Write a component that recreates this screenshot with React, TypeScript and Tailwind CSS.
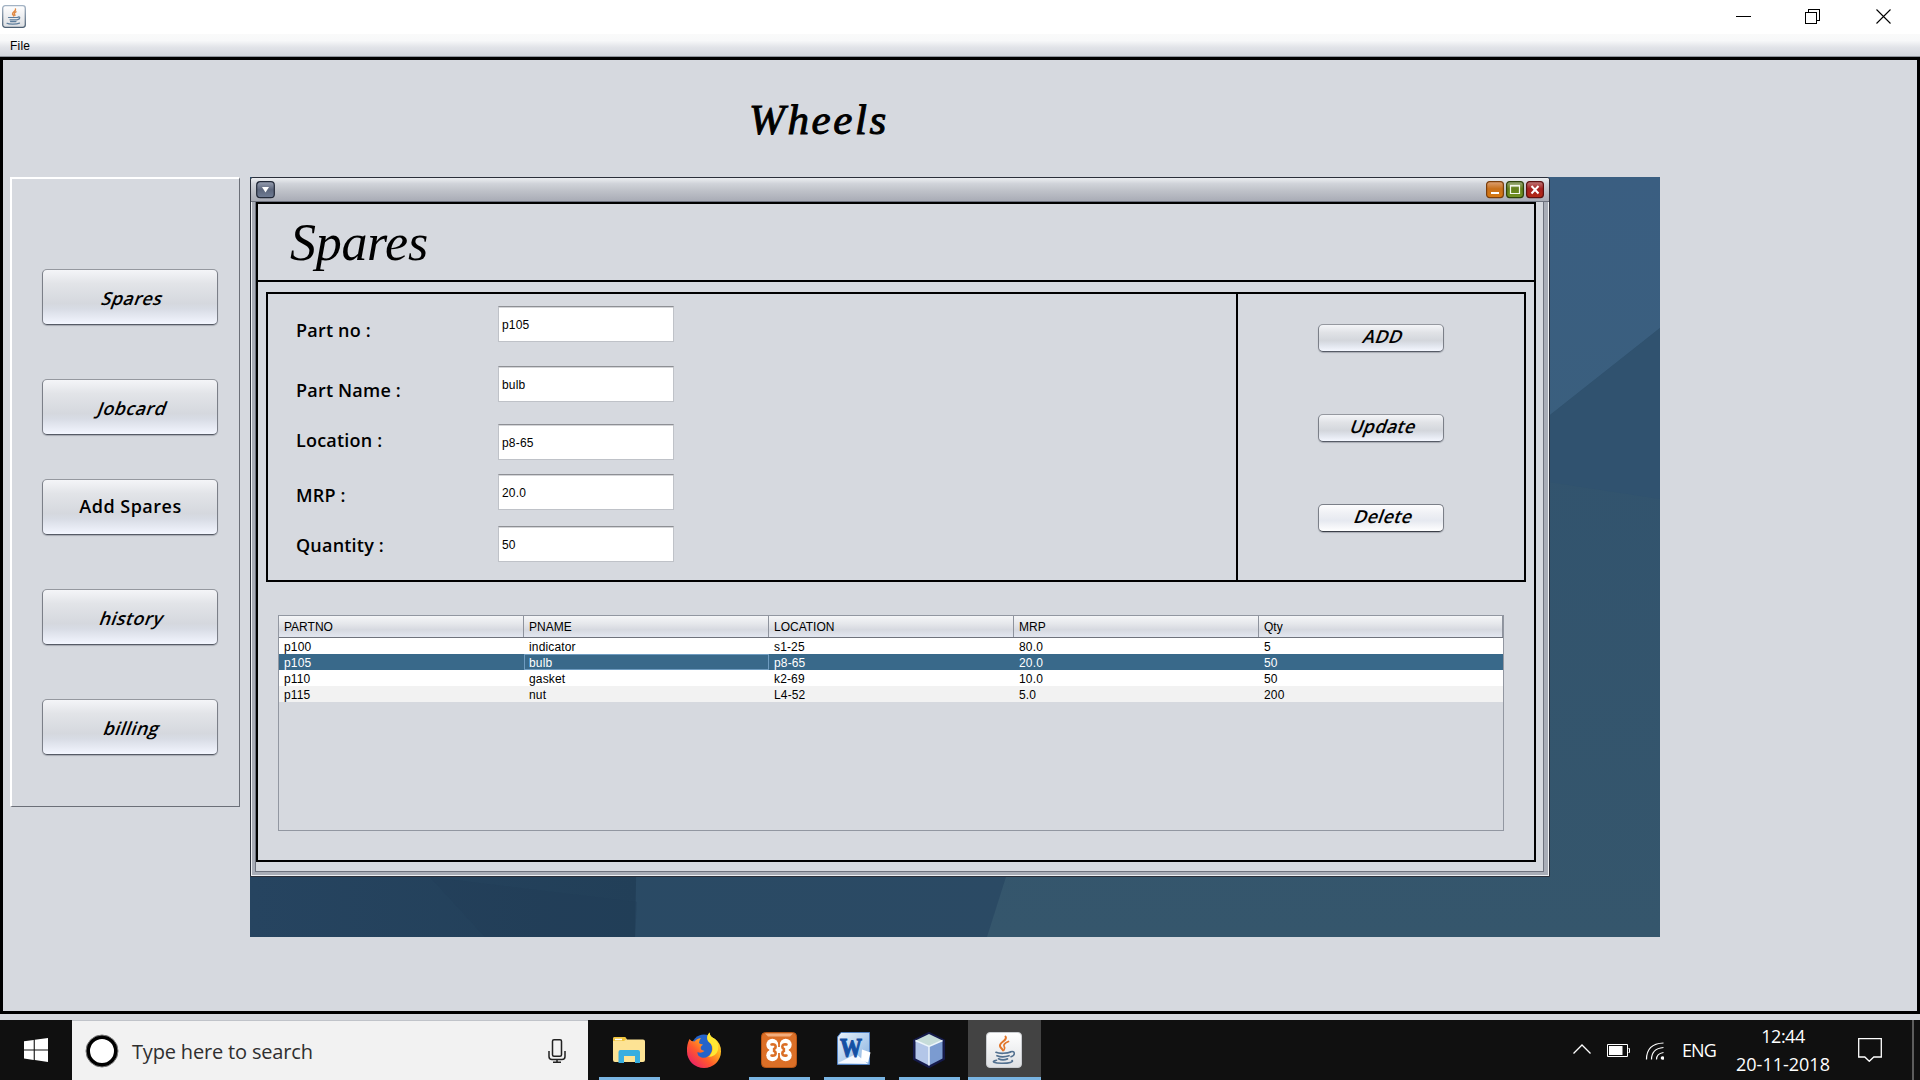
import React from "react";

const UI = "font-['Liberation_Sans',Arial,sans-serif]";
const SEGOE = "font-['Open_Sans','Noto_Sans',sans-serif]";

function JavaCup({ className }: { className: string }) {
  return (
    <svg viewBox="0 0 36 36" className={className}>
      <defs>
        <linearGradient id="cupBg" x1="0" y1="0" x2="0" y2="1">
          <stop offset="0" stopColor="#ffffff" />
          <stop offset="1" stopColor="#dfe1e4" />
        </linearGradient>
      </defs>
      <rect x="0.5" y="0.5" width="35" height="35" rx="3.5" fill="url(#cupBg)" stroke="#c9ccd0" />
      <g fill="none" strokeLinecap="round">
        <path d="M19.5 4.5c2.8 4-6.5 5.500-5.500 9.500.4 2 2.500 2.800 3 4.500" stroke="#e2762a" strokeWidth="2" />
        <path d="M22.500 9.500c-3.500 1.500-5.500 3-4.300 5 .9 1.400.9 2.200-.2 3.500" stroke="#e2762a" strokeWidth="1.700" />
        <path d="M10 20.300c3 1.500 11.500 1.200 14.500-.3M11 23.700c3.500 1.400 8.500 1.200 12 0M12.500 26.800c2.500 1.200 6.500 1.200 9 .1" stroke="#52708f" strokeWidth="1.700" />
        <path d="M24.500 19.800c5-1.500 5 3.500.5 5" stroke="#52708f" strokeWidth="1.500" />
        <path d="M10.500 28.200c-6.500 1.200-2 3.300 6 3.100 6.500-.1 11.500-1.300 9.500-2.800" stroke="#52708f" strokeWidth="1.600" />
      </g>
    </svg>
  );
}

function TitleBar() {
  return (
    <div className="flex h-[34px] shrink-0 items-start justify-between bg-white">
      <svg viewBox="0 0 24 23" className="mt-[5px] ml-[2px] h-[23px] w-[24px]">
        <defs>
          <linearGradient id="appIcon" x1="0" y1="0" x2="0" y2="1">
            <stop offset="0" stopColor="#ffffff" />
            <stop offset="1" stopColor="#dcdee2" />
          </linearGradient>
          <linearGradient id="appEdge" x1="0" y1="0" x2="0" y2="1">
            <stop offset="0" stopColor="#a3b3c4" />
            <stop offset="1" stopColor="#4d6074" />
          </linearGradient>
        </defs>
        <rect x="0.700" y="0.700" width="22.600" height="21.600" rx="2.500" fill="url(#appIcon)" stroke="url(#appEdge)" strokeWidth="1.300" />
        <g fill="none" strokeLinecap="round">
          <path d="M13.500 4c1 2-3.500 3-3 5 .2 1 1.200 1.200 1.200 2M14 6.800c-2 1-2 2.200-1 3.400" stroke="#e08a45" strokeWidth="1.400" />
          <path d="M6.500 12.500h9.500M8 14.800h7M8.500 16.600h5.500M16 12c2.500-.6 2.200 2-.3 2.600M5 18.300c2 1.300 9.500 1.200 12.500-.2" stroke="#5d7d9c" strokeWidth="1.200" />
        </g>
      </svg>
      <svg viewBox="0 0 156 15" className="mt-[9px] mr-[28px] h-[15px] w-[156px]" fill="none" stroke="#000" strokeWidth="1" shapeRendering="crispEdges">
        <path d="M0 7.500H15" />
        <path d="M69.500 3.500h11v11h-11z M72.500 3.500v-3h11v11h-3" />
        <path d="M140.500 0.500l14 14M154.500 0.500l-14 14" shapeRendering="auto" strokeWidth="1.100" />
      </svg>
    </div>
  );
}

function NavButton({ label, slanted, gap }: { label: string; slanted: boolean; gap: string }) {
  return (
    <button
      className={`${gap} ${SEGOE} flex h-[56px] w-[176px] items-center justify-center rounded-[5px] border border-t-[#95989f] border-r-[#7b7f88] border-b-[#565b66] border-l-[#7b7f88] bg-[linear-gradient(180deg,#f4f5f8_0%,#e2e4e8_25%,#d5d8de_62%,#d8dce5_72%,#edf0f9_94%,#f4f7ff_100%)] pb-[1px] text-[18px] leading-[24px] font-semibold text-black shadow-[0_1px_1px_rgba(110,115,125,0.45)]`}
    >
      <span className={slanted ? "ml-[6px] inline-block -skew-x-[20deg] pt-[3px] tracking-[0.400px]" : "-mt-[1px] ml-[1px] inline-block tracking-[0.500px]"}>{label}</span>
    </button>
  );
}

function ActionButton({ label, gap, hot }: { label: string; gap: string; hot?: boolean }) {
  return (
    <button
      className={`${gap} ${SEGOE} ${
        hot
          ? "border-t-[#7b7f88] border-b-[#3b3f48] bg-[linear-gradient(180deg,#fdfdfe_0%,#f0f1f5_30%,#e6e9f0_60%,#ffffff_100%)]"
          : "border-t-[#95989f] border-b-[#565b66] bg-[linear-gradient(180deg,#f4f5f8_0%,#e0e2e6_30%,#d3d6dc_60%,#e0e4ec_78%,#f4f7ff_100%)]"
      } flex h-[28px] w-[126px] items-center justify-center rounded-[5px] border border-r-[#7b7f88] border-l-[#7b7f88] pb-[4px] text-[18px] leading-[24px] font-semibold text-black shadow-[0_1px_1px_rgba(110,115,125,0.45)]`}
    >
      <span className="ml-[6px] inline-block -skew-x-[20deg] tracking-[0.300px]">{label}</span>
    </button>
  );
}

function Sidebar() {
  return (
    <div className="flex h-[630px] w-[230px] shrink-0 flex-col border-t-2 border-r border-b border-l-2 border-t-white border-r-[#6b6f78] border-b-[#6b6f78] border-l-white pl-[30px]">
      <NavButton label="Spares" slanted gap="mt-[90px]" />
      <NavButton label="Jobcard" slanted gap="mt-[54px]" />
      <NavButton label="Add Spares" slanted={false} gap="mt-[44px]" />
      <NavButton label="history" slanted gap="mt-[54px]" />
      <NavButton label="billing" slanted gap="mt-[54px]" />
    </div>
  );
}

function FrameTitle() {
  return (
    <div className="flex h-[24px] shrink-0 items-start justify-between rounded-t-[2px] border-b border-[#6d717d] bg-[linear-gradient(180deg,#eceef1_0%,#d0d3d9_25%,#bfc2c9_55%,#a9acb6_100%)] pr-[5px] pl-[5px]">
      <svg viewBox="0 0 19 18" className="mt-[3px] h-[18px] w-[19px]">
        <defs>
          <linearGradient id="menuBtn" x1="0" y1="0" x2="0" y2="1">
            <stop offset="0" stopColor="#99a0b2" />
            <stop offset="0.500" stopColor="#5c667c" />
            <stop offset="1" stopColor="#6f7c94" />
          </linearGradient>
        </defs>
        <rect x="0.700" y="0.700" width="17.600" height="16" rx="3.500" fill="url(#menuBtn)" stroke="#222938" strokeWidth="1.200" />
        <path d="M6 6h7l-3.500 5.500z" fill="#fff" />
      </svg>
      <svg viewBox="0 0 58 18" className="mt-[3px] h-[18px] w-[58px]">
        <defs>
          <linearGradient id="minBtn" x1="0" y1="0" x2="0" y2="1">
            <stop offset="0" stopColor="#dda276" />
            <stop offset="0.450" stopColor="#c8701c" />
            <stop offset="1" stopColor="#d8790f" />
          </linearGradient>
          <linearGradient id="maxBtn" x1="0" y1="0" x2="0" y2="1">
            <stop offset="0" stopColor="#9aa77c" />
            <stop offset="0.450" stopColor="#62801b" />
            <stop offset="1" stopColor="#729222" />
          </linearGradient>
          <linearGradient id="closeBtn" x1="0" y1="0" x2="0" y2="1">
            <stop offset="0" stopColor="#c07b7b" />
            <stop offset="0.450" stopColor="#a62020" />
            <stop offset="1" stopColor="#b32914" />
          </linearGradient>
        </defs>
        <rect x="0.600" y="0.600" width="16.800" height="16" rx="3" fill="url(#minBtn)" stroke="#7c3f0c" strokeWidth="1.200" />
        <path d="M5 12h8" stroke="#fff" strokeWidth="2" />
        <rect x="20.600" y="0.600" width="16.800" height="16" rx="3" fill="url(#maxBtn)" stroke="#2f430a" strokeWidth="1.200" />
        <path d="M24.500 4.500h9v8h-9z" stroke="#f4f7ec" strokeWidth="1.200" fill="none" />
        <path d="M24 4.700h10" stroke="#f4f7ec" strokeWidth="1.800" />
        <rect x="40.600" y="0.600" width="16.800" height="16" rx="3" fill="url(#closeBtn)" stroke="#5e1010" strokeWidth="1.200" />
        <path d="M45.500 5l7 7.500M52.500 5l-7 7.500" stroke="#fff" strokeWidth="2" />
      </svg>
    </div>
  );
}

const labels = [
  { text: "Part no :", gap: "mt-[24px]" },
  { text: "Part Name :", gap: "mt-[36px]" },
  { text: "Location :", gap: "mt-[26px]" },
  { text: "MRP :", gap: "mt-[31px]" },
  { text: "Quantity :", gap: "mt-[26px]" },
];

const fields = [
  { value: "p105", gap: "mt-[12px]" },
  { value: "bulb", gap: "mt-[24px]" },
  { value: "p8-65", gap: "mt-[22px]" },
  { value: "20.0", gap: "mt-[14px]" },
  { value: "50", gap: "mt-[16px]" },
];

function PartForm() {
  return (
    <div className="mt-[10px] ml-[8px] flex h-[290px] w-[1260px] border-2 border-black">
      <div className="flex w-[968px]">
        <div className={`${SEGOE} flex w-[230px] flex-col pl-[28px] text-[18px] leading-[24px] font-semibold tracking-[0.200px] text-black`}>
          {labels.map((l) => (
            <div key={l.text} className={l.gap}>
              {l.text}
            </div>
          ))}
        </div>
        <div className="flex flex-col">
          {fields.map((f) => (
            <div
              key={f.value}
              className={`${f.gap} flex h-[36px] w-[176px] items-center border border-t-[#8d8f94] border-r-[#bfc2c8] border-b-[#bfc2c8] border-l-[#bfc2c8] bg-white pt-[2px] pl-[3px] text-[12px] leading-[14px] tracking-[0.200px] text-black shadow-[inset_0_1px_0_#d4d5d8]`}
            >
              {f.value}
            </div>
          ))}
        </div>
      </div>
      <div className="flex flex-1 flex-col border-l-2 border-black pl-[80px]">
        <ActionButton label="ADD" gap="mt-[30px]" />
        <ActionButton label="Update" gap="mt-[62px]" />
        <ActionButton label="Delete" gap="mt-[62px]" hot />
      </div>
    </div>
  );
}

const columns = ["PARTNO", "PNAME", "LOCATION", "MRP", "Qty"];
const rows = [
  ["p100", "indicator", "s1-25", "80.0", "5"],
  ["p105", "bulb", "p8-65", "20.0", "50"],
  ["p110", "gasket", "k2-69", "10.0", "50"],
  ["p115", "nut", "L4-52", "5.0", "200"],
];
const rowTone = ["bg-white text-black", "bg-[#39698a] text-white", "bg-white text-black", "bg-[#f2f2f2] text-black"];

function PartTable() {
  return (
    <div className="mt-[33px] ml-[20px] h-[216px] w-[1226px] border border-[#9297a1] text-[12px] leading-[16px]">
      <div className="grid h-[22px] grid-cols-[245px_245px_245px_245px_244px] border-b border-[#6f737c] bg-[linear-gradient(180deg,#f5f6f8_0%,#e4e6ea_40%,#d6d9e0_65%,#e3e7f0_100%)]">
        {columns.map((c) => (
          <div key={c} className="border-r border-[#8e939d] pt-[3px] pl-[5px]">
            {c}
          </div>
        ))}
      </div>
      {rows.map((r, i) => (
        <div key={r[0]} className={`${rowTone[i]} grid h-[16px] grid-cols-[245px_245px_245px_245px_244px] leading-[18px] tracking-[0.150px]`}>
          {r.map((cell, j) => (
            <div key={j} className={i === 1 && j === 1 ? "h-[16px] pl-[5px] shadow-[inset_0_0_0_1px_#6f9cc0]" : "h-[16px] pl-[5px]"}>
              {cell}
            </div>
          ))}
        </div>
      ))}
    </div>
  );
}

function SparesFrame() {
  return (
    <div className="relative flex h-[700px] w-[1300px] flex-col rounded-t-[3px] border border-[#2b2f3a] bg-[#a9adb7] shadow-[inset_1px_1px_0_#eef0f3,inset_-1px_-1px_0_#eef0f3]">
      <FrameTitle />
      <div className="mx-[5px] h-[670px] border-r border-b border-[#6d717d] bg-[#d6d9df] shadow-[-1px_0_0_#6d717d]">
        <div className="h-[660px] w-[1280px] border-2 border-black">
          <div className="h-[78px] border-b-2 border-black pl-[32px] font-['Liberation_Serif','Times_New_Roman',serif] text-[52px] leading-[78px] tracking-[-0.300px] text-black italic">
            Spares
          </div>
          <PartForm />
          <PartTable />
        </div>
      </div>
    </div>
  );
}

function Desktop() {
  return (
    <div className="relative ml-[10px] h-[760px] w-[1410px] shrink-0 overflow-hidden">
      <svg viewBox="0 0 1410 760" className="absolute inset-0 h-full w-full" preserveAspectRatio="none">
        <defs>
          <linearGradient id="deskSky" x1="0" y1="0" x2="0" y2="1">
            <stop offset="0" stopColor="#3a5e81" />
            <stop offset="1" stopColor="#3a5f7d" />
          </linearGradient>
          <linearGradient id="deskMid" x1="0" y1="0" x2="0" y2="1">
            <stop offset="0" stopColor="#30526f" />
            <stop offset="1" stopColor="#35566c" />
          </linearGradient>
          <linearGradient id="deskLeft" x1="0" y1="0" x2="1" y2="0">
            <stop offset="0" stopColor="#264460" />
            <stop offset="1" stopColor="#223f58" />
          </linearGradient>
          <linearGradient id="deskCenter" x1="0" y1="0" x2="1" y2="0">
            <stop offset="0" stopColor="#294a65" />
            <stop offset="1" stopColor="#2b4a64" />
          </linearGradient>
        </defs>
        <rect width="1410" height="760" fill="url(#deskMid)" />
        <path d="M1200 0H1410V151L1300 238L1200 317Z" fill="url(#deskSky)" />
        <path d="M1200 290L1410 322V151L1300 238Z" fill="#30526f" />
        <path d="M0 600H780L756 700L737 760H0Z" fill="url(#deskCenter)" />
        <path d="M0 600H388L385 760H0Z" fill="url(#deskLeft)" />
        <path d="M180 700L235 760H385L387 725Z" fill="#213d56" opacity="0.300" />
      </svg>
      <SparesFrame />
    </div>
  );
}

function TaskItem({ children, gap, open }: { children: React.ReactNode; gap: string; open?: boolean }) {
  return (
    <div className={`${gap} ${open ? "border-[#79b4e2]" : "border-transparent"} flex w-[61px] items-center justify-center border-b-[3px] pt-[3px] pr-[2px]`}>
      {children}
    </div>
  );
}

function Taskbar() {
  return (
    <div className={`${SEGOE} flex h-[60px] shrink-0 bg-[#101010] text-white`}>
      <div className="flex w-[72px] shrink-0 items-center justify-center">
        <svg viewBox="0 0 24 24" className="h-[24px] w-[24px]" fill="#fff">
          <path d="M0 3.300L9.700 2V11.400H0zM10.800 1.800L24 0V11.400H10.800zM0 12.500H9.700V21.900L0 20.600zM10.800 12.500H24V24L10.800 22.100z" />
        </svg>
      </div>
      <div className="flex w-[516px] shrink-0 items-center border-t border-[#c0c3c9] bg-[#f2f2f2] pl-[13px]">
        <svg viewBox="0 0 34 34" className="h-[34px] w-[34px]">
          <circle cx="17" cy="17" r="14" fill="#fff" stroke="#000" strokeWidth="4" />
          <circle cx="17" cy="17" r="16" fill="none" stroke="#777" strokeWidth="1" />
        </svg>
        <span className="ml-[13px] w-[416px] pt-[2px] text-[20px] leading-[26px] tracking-[-0.170px] text-[#2f2f2f]">Type here to search</span>
        <svg viewBox="0 0 18 24" className="h-[24px] w-[18px]" fill="none" stroke="#222" strokeWidth="1.500">
          <rect x="4.500" y="0.800" width="9" height="16.500" rx="1.500" />
          <path d="M1 12v5.500q0 3 3 3h10q3 0 3-3V12M9 20.500V23M5 23.200h8" />
        </svg>
      </div>
      <div className="flex flex-1 items-stretch">
        <TaskItem gap="ml-[11px]" open>
          <svg viewBox="0 0 34 28" className="h-[28px] w-[34px]">
            <path d="M1 3q0-2 2-2h10l2 2.500h16q2 0 2 2V24q0 2-2 2H3q-2 0-2-2z" fill="#fde394" />
            <path d="M1 4V3q0-2 2-2h10l1.500 2L12 5H1z" fill="#f0c43c" />
            <path d="M3 3.500h7" stroke="#fff" strokeWidth="1.500" />
            <path d="M6.500 27V16q0-2 2-2H26q2 0 2 2v11h-5v-7H12v7z" fill="#38aee0" />
          </svg>
        </TaskItem>
        <TaskItem gap="ml-[14px]">
          <svg viewBox="0 0 36 36" className="h-[36px] w-[36px]">
            <defs>
              <linearGradient id="foxBody" x1="1" y1="0.100" x2="0.200" y2="1">
                <stop offset="0" stopColor="#fff13d" />
                <stop offset="0.350" stopColor="#ffae1f" />
                <stop offset="0.650" stopColor="#ff5a2c" />
                <stop offset="1" stopColor="#e91e6b" />
              </linearGradient>
            </defs>
            <circle cx="18" cy="15" r="12.500" fill="#2563ca" />
            <path d="M3.500 7Q0.500 13 1 19.500A17 16.500 0 0 0 35 19.500Q35 11 29 7Q24 5 23.500 0.500Q20 4.500 22 9Q28 14 25.500 20Q22 27 15.500 25.500Q11 24 11.500 20Q15 22 18.500 19Q13.500 18 15 14.500L17 12.500Q14 12 13 11Q13 8 15 6Q10.500 6.500 8.500 9.500Q5 9.500 3.500 7Z" fill="url(#foxBody)" />
            <path d="M23.500 0.500Q20 4.500 22 9Q29 14 25.500 21Q24 24 22 25Q30 25 32 18Q33 11 29 7Q24 5 23.500 0.500Z" fill="#ffe834" />
          </svg>
        </TaskItem>
        <TaskItem gap="ml-[14px]" open>
          <svg viewBox="0 0 36 36" className="h-[36px] w-[36px]">
            <rect x="0.500" y="0.500" width="35" height="35" rx="4" fill="#db6f27" stroke="#b75515" />
            <path d="M4 1.500h28l-3 3H7z" fill="#f2ad7d" />
            <g fill="#fff">
              <circle cx="11.300" cy="12.800" r="6" />
              <circle cx="24.700" cy="12.800" r="6" />
              <circle cx="11.300" cy="23.200" r="6" />
              <circle cx="24.700" cy="23.200" r="6" />
              <path d="M9 12h18v12H9z" />
            </g>
            <g fill="none" stroke="#db6f27" strokeWidth="2.600" strokeLinecap="round" strokeLinejoin="round">
              <path d="M10.500 12.500q4-.8 4.200 2.300 0 1.600-1.700 2.200M10.500 23.500q4 .8 4.200-2.300 0-1.600-1.700-2.200" />
              <path d="M25.500 12.500q-4-.8-4.200 2.300 0 1.600 1.700 2.200M25.500 23.500q-4 .8-4.200-2.300 0-1.600 1.700-2.200" />
            </g>
            <path d="M18 10v5M18 21v5M5 18h2.500M28.500 18H31" stroke="#db6f27" strokeWidth="1.800" />
          </svg>
        </TaskItem>
        <TaskItem gap="ml-[14px]" open>
          <svg viewBox="0 0 35 34" className="mb-[2px] h-[34px] w-[35px]">
            <defs>
              <linearGradient id="docPage" x1="0" y1="0" x2="1" y2="1">
                <stop offset="0" stopColor="#e9f3fc" />
                <stop offset="1" stopColor="#86b0df" />
              </linearGradient>
            </defs>
            <path d="M5 0.500H33.500V32.500H1.500V5Z" fill="url(#docPage)" stroke="#4f7fc0" />
            <path d="M2 31l18-9 12 10z" fill="#f5f9ff" />
            <path d="M26 17.500l8.500 3-2.500 10-7-2z" fill="#fff" />
            <text x="4" y="25" fontFamily="Liberation Serif, serif" fontSize="27" fontWeight="700" fill="#1450a4" stroke="#1450a4" strokeWidth="1.200" textLength="22" lengthAdjust="spacingAndGlyphs">
              W
            </text>
          </svg>
        </TaskItem>
        <TaskItem gap="ml-[14px]" open>
          <svg viewBox="0 0 36 36" className="h-[36px] w-[36px]">
            <path d="M18 1L33 8.500V27L18 35L3 27V8.500Z" fill="#151a4a" stroke="#151a4a" strokeWidth="2" strokeLinejoin="round" />
            <path d="M18 2L31.500 8.500L18 14.500L4.500 8.500Z" fill="#c6dcd9" />
            <path d="M4.500 8.500L18 14.500V33.500L4.500 26.500Z" fill="#b3c6e8" />
            <path d="M31.500 8.500L18 14.500V33.500L31.500 26.500Z" fill="#7b9bd0" />
            <path d="M4.500 8.500L18 14.500L31.500 8.500M18 14.500V33.500" stroke="#edf5fb" strokeWidth="1.500" fill="none" />
          </svg>
        </TaskItem>
        <div className="ml-[8px] flex w-[73px] flex-col items-center justify-between border-b-[3px] border-[#79b4e2] bg-[#434343] pt-[12px] pr-[1px]">
          <JavaCup className="h-[36px] w-[36px]" />
        </div>
      </div>
      <div className="flex w-[347px] shrink-0 items-center">
        <svg viewBox="0 0 91 24" className="h-[24px] w-[91px]" fill="none" stroke="#fff" strokeWidth="1.300">
          <path d="M0.500 15.500L9 7l8.500 8.500" />
          <path d="M34.500 6.500h20v12h-20z M55.500 10.500h1v4h-1" strokeWidth="1" />
          <path d="M36 8h13.500v9H36z" fill="#fff" stroke="none" />
          <path d="M73.500 21.500Q73.500 5.500 90.500 5M78.500 21.500Q78.500 10.500 90.500 9.500M83.500 21.500Q83.500 15.500 90.500 14.500" strokeWidth="1.200" />
          <circle cx="89.500" cy="20" r="1.800" fill="#fff" stroke="none" />
        </svg>
        <span className="ml-[18px] w-[52px] text-[18px] leading-[24px] tracking-[-0.900px]">ENG</span>
        <div className="ml-[1px] flex w-[96px] flex-col items-center text-[18px] leading-[28px]">
          <span className="tracking-[-0.500px]">12:44</span>
          <span>20-11-2018</span>
        </div>
        <svg viewBox="0 0 24 24" className="ml-[27px] h-[24px] w-[24px]" fill="none" stroke="#fff" strokeWidth="1.300">
          <path d="M0.700 0.700h22.600v18.300h-7.500l-4.500 4.300-4.500-4.300H0.700z" />
        </svg>
        <div className="ml-[30px] h-full w-[2px] bg-[#5c5c5c]" />
      </div>
    </div>
  );
}

export default function App() {
  return (
    <div className={`${UI} flex h-[1080px] w-[1920px] flex-col overflow-hidden bg-[#d6d9df] text-black`}>
      <TitleBar />
      <div className="flex h-[23px] shrink-0 items-center border-b border-[#8f949c] bg-[linear-gradient(180deg,#fafafa_0%,#f7f8f9_30%,#e2e4e9_60%,#d2d6dc_100%)] pt-[2px] pl-[10px] text-[12px] leading-[16px] tracking-[0.200px]">
        File
      </div>
      <div className="flex h-[957px] shrink-0 flex-col border-[3px] border-black">
        <div className="h-[117px] shrink-0 pt-[35px] pl-[746px] font-['Z003','URW_Chancery_L','Liberation_Serif',serif] text-[43px] leading-[50px] tracking-[2.600px] italic [-webkit-text-stroke:1px_#000]">
          Wheels
        </div>
        <div className="flex items-start pl-[7px]">
          <Sidebar />
          <Desktop />
        </div>
      </div>
      <div className="h-[6px] shrink-0 bg-[#d6d9df]" />
      <Taskbar />
    </div>
  );
}
